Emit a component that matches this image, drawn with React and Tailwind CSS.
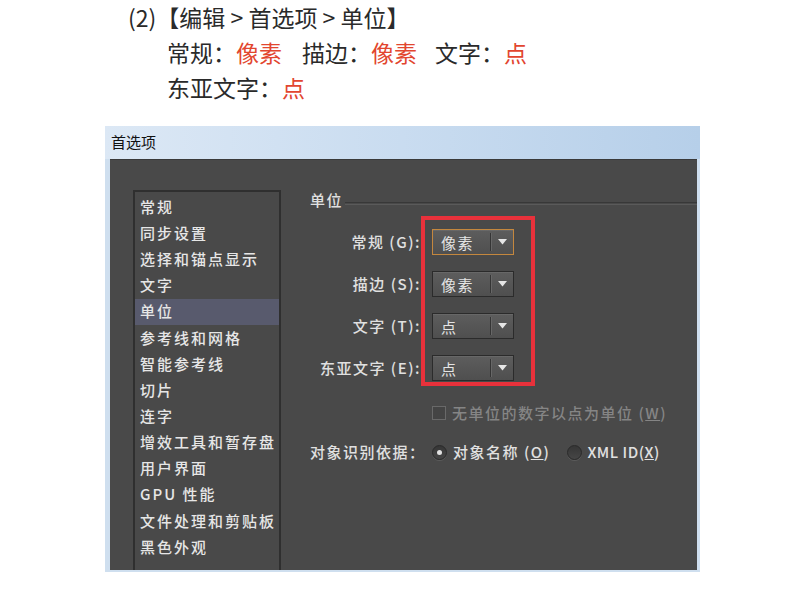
const navItems = [
  '常规',
  '同步设置',
  '选择和锚点显示',
  '文字',
  '单位',
  '参考线和网格',
  '智能参考线',
  '切片',
  '连字',
  '增效工具和暂存盘',
  '用户界面',
  'GPU 性能',
  '文件处理和剪贴板',
  '黑色外观',
];

const unitRows = [
  { label: '常规 (G):', value: '像素', focused: true },
  { label: '描边 (S):', value: '像素' },
  { label: '文字 (T):', value: '点' },
  { label: '东亚文字 (E):', value: '点' },
];

function Dropdown({ value, focused }) {
  return (
    <div
      className={[
        'flex h-[26px] w-[82px] items-center border bg-gradient-to-b from-[#5d5d5d] to-[#4f4f4f] shadow-[inset_0_1px_0_rgba(255,255,255,0.07)]',
        focused ? 'border-[#c4873e]' : 'border-[#2b2b2b]',
      ].join(' ')}
    >
      <span className="w-[57px] pl-[8px] text-[15px] leading-none tracking-[1.5px] text-[#e4e4e4]">{value}</span>
      <span className="h-[18px] w-[2px] border-l border-[#353535] border-r border-r-[#676767]" />
      <span className="flex flex-1 items-center justify-center">
        <svg width="9" height="6" viewBox="0 0 9 6">
          <polygon points="0,0 9,0 4.5,5.5" fill="#e6e6e6" />
        </svg>
      </span>
    </div>
  );
}

function Radio({ checked }) {
  return (
    <span className="flex h-[15px] w-[15px] items-center justify-center rounded-full border border-[#2a2a2a] bg-gradient-to-b from-[#363636] to-[#464646] shadow-[0_1px_0_rgba(255,255,255,0.1)]">
      {checked ? <span className="h-[5px] w-[5px] rounded-full bg-[#e2e2e2]" /> : null}
    </span>
  );
}

export default function App() {
  return (
    <div className="h-[612px] w-[800px] overflow-hidden bg-white font-['Noto_Sans_CJK_SC','Noto_Sans',sans-serif]">
      <div className="pl-[128px] text-[23px] leading-[35px] text-[#2a2a2a]">
        <p>(2)【编辑 &gt; 首选项 &gt; 单位】</p>
        <p className="pl-[39px]">
          常规：<span className="text-[#e2462f]">像素</span>
          <span className="ml-[20px]">描边：</span>
          <span className="text-[#e2462f]">像素</span>
          <span className="ml-[18px]">文字：</span>
          <span className="text-[#e2462f]">点</span>
        </p>
        <p className="pl-[39px]">
          东亚文字：<span className="text-[#e2462f]">点</span>
        </p>
      </div>

      <div className="ml-[105px] mt-[21px] flex h-[446px] w-[595px] flex-col bg-[#cfdfef]">
        <div className="flex h-[33px] items-center bg-gradient-to-r from-[#dce8f5] via-[#c9dcf0] to-[#b6cfe9] pl-[6px] text-[15px] text-[#111]">
          首选项
        </div>

        <div className="mb-[2px] ml-[5px] mr-[3px] flex flex-1 border-t border-[#3a3a3a] bg-[#494949]">
          {/* category list */}
          <div className="ml-[23px] mt-[30px] w-[148px] border-2 border-b-0 border-[#2f2f2f] pt-[2px]">
            {navItems.map((item) => (
              <div
                key={item}
                className={[
                  'flex h-[26.15px] items-center pl-[5px] text-[15px] font-medium tracking-[2px] text-[#e6e6e6]',
                  item === '单位' ? 'bg-[#585a6d]' : '',
                ].join(' ')}
              >
                {item}
              </div>
            ))}
          </div>

          {/* unit settings */}
          <div className="flex flex-1 flex-col text-[15px] tracking-[1.5px] text-[#e0e0e0]">
            <div className="mt-[30px] flex h-[20px] items-center pl-[29px]">
              <span className="font-medium">单位</span>
              <span className="ml-[2px] mt-[6px] h-[3px] flex-1 border-t border-[#383838] border-b border-b-[#5a5a5a]" />
            </div>

            <div className="mt-[6px] flex items-start">
              <div className="flex w-[140px] flex-col gap-[16px] pt-[13px]">
                {unitRows.map((row) => (
                  <div key={row.label} className="flex h-[26px] items-center justify-end font-medium">
                    {row.label}
                  </div>
                ))}
              </div>
              <div className="flex flex-col gap-[16px] border-4 border-[#e8313b] pb-[1px] pl-[7px] pr-[17px] pt-[9px]">
                {unitRows.map((row) => (
                  <Dropdown key={row.label} value={row.value} focused={row.focused} />
                ))}
              </div>
            </div>

            <div className="mt-[19px] flex h-[16px] items-center pl-[151px] text-[#858585]">
              <span className="h-[14px] w-[14px] border border-[#696969] bg-[#444]" />
              <span className="ml-[6px] font-medium">
                无单位的数字以点为单位 (<span className="underline">W</span>)
              </span>
            </div>

            <div className="mt-[23px] flex h-[16px] items-center font-medium">
              <span className="w-[148px] pl-[29px]">对象识别依据：</span>
              <span className="ml-[3px]">
                <Radio checked />
              </span>
              <span className="ml-[6px]">
                对象名称 (<span className="underline">O</span>)
              </span>
              <span className="ml-[17px]">
                <Radio />
              </span>
              <span className="ml-[5px] tracking-[0.5px]">
                XML ID(<span className="underline">X</span>)
              </span>
            </div>
          </div>
        </div>
      </div>
    </div>
  );
}
